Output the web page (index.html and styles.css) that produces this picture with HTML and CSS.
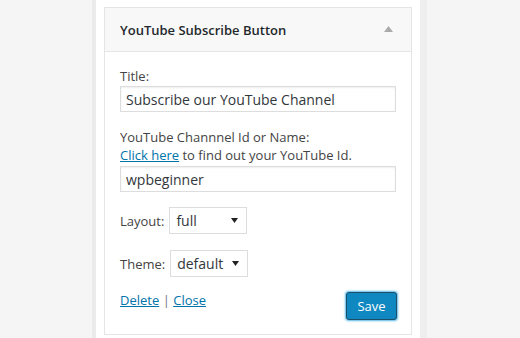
FILE: index.html
```html
<!DOCTYPE html>
<html lang="en">
<head>
  <meta charset="UTF-8" />
  <meta name="viewport" content="width=device-width, initial-scale=1.0" />
  <title>YouTube Subscribe Button - Widget</title>
  <link rel="stylesheet" href="styles.css">
</head>
<body>
  <div class="sidebar-column">
    <div class="widget">
      <div class="widget-top">
        <h3 class="widget-title">YouTube Subscribe Button</h3>
        <svg class="widget-toggle" width="9" height="6" viewBox="0 0 9 6">
          <path d="M4.5 0 L9 6 L0 6 Z" fill="#aaaaaa" />
        </svg>
      </div>
      <div class="widget-inside">
        <div class="field">
          <label class="field-label">Title:</label>
          <input type="text" class="text-input" value="Subscribe our YouTube Channel" />
        </div>

        <div class="field">
          <label class="field-label">YouTube Channnel Id or Name:</label>
          <div class="field-help"><a href="#">Click here</a> to find out your YouTube Id.</div>
          <input type="text" class="text-input" value="wpbeginner" />
        </div>

        <div class="field field-inline">
          <label class="field-label">Layout:</label>
          <div class="select">
            <span>full</span>
            <svg width="7" height="5" viewBox="0 0 7 5"><path d="M0 0 L7 0 L3.5 5 Z" fill="#222" /></svg>
          </div>
        </div>

        <div class="field field-inline">
          <label class="field-label">Theme:</label>
          <div class="select">
            <span>default</span>
            <svg width="7" height="5" viewBox="0 0 7 5"><path d="M0 0 L7 0 L3.5 5 Z" fill="#222" /></svg>
          </div>
        </div>

        <div class="widget-control-actions">
          <div class="action-links">
            <a href="#">Delete</a> <span class="sep">|</span> <a href="#">Close</a>
          </div>
          <button class="button-primary">Save</button>
        </div>
      </div>
    </div>
  </div>
</body>
</html>
```

FILE: styles.css
```css
:root {
  --page-bg: #f5f5f5;
  --column-edge: #ebebeb;
  --border: #e5e5e5;
  --input-border: #dddddd;
  --text: #444444;
  --heading: #23282d;
  --link: #0073aa;
  --primary: #0f87c0;
  --primary-border: #1d4f68;
  font-family: "Open Sans", "Noto Sans", sans-serif;
}

body {
  margin: 0;
  background-color: var(--page-bg);
  font-family: inherit;
  font-size: 13px;
  color: var(--text);
}

.sidebar-column {
  margin-left: 92px;
  width: 307px;
  min-height: 100vh;
  box-sizing: content-box;
  padding: 7px 9px 0 8px;
  background-color: #ffffff;
  border-left: 4px solid var(--column-edge);
  border-right: 7px solid #eeeeee;
}

.widget {
  width: 308px;
  box-sizing: border-box;
  border: 1px solid var(--border);
  background-color: #ffffff;
}

.widget-top {
  display: flex;
  align-items: center;
  justify-content: space-between;
  height: 43px;
  padding: 0 18px 0 15px;
  background-color: #f8f8f8;
  border-bottom: 1px solid var(--border);
}

.widget-title {
  margin: 0;
  font-size: 13px;
  font-weight: 600;
  color: var(--heading);
}

.widget-toggle {
  margin-top: -2px;
}

.widget-inside {
  padding: 15px 14px 14px 15px;
}

.field {
  display: flex;
  flex-direction: column;
  margin-bottom: 16px;
}

.field-label,
.field-help {
  line-height: 18px;
}

.field-label {
  margin-bottom: 1px;
}

.field-help {
  margin-top: -1px;
  margin-bottom: 2px;
}

.field-help a,
.action-links a {
  color: var(--link);
  text-decoration: underline;
}

.text-input {
  box-sizing: border-box;
  width: 276px;
  height: 26px;
  margin: 0;
  padding: 0 5px;
  border: 1px solid var(--input-border);
  box-shadow: inset 0 1px 2px rgba(0, 0, 0, 0.07);
  font-family: inherit;
  font-size: 14px;
  color: #32373c;
  outline: none;
}

.field:nth-child(2) {
  margin-bottom: 15px;
}

.field-inline {
  flex-direction: row;
  align-items: center;
  gap: 5px;
}

.field-inline .field-label {
  margin-bottom: 0;
}

.select {
  box-sizing: border-box;
  width: 78px;
  height: 27px;
  display: flex;
  align-items: center;
  justify-content: space-between;
  padding: 0 8px 0 6px;
  border: 1px solid var(--input-border);
  background-color: #ffffff;
  font-size: 14px;
  color: #32373c;
}

.widget-control-actions {
  display: flex;
  justify-content: space-between;
  align-items: flex-start;
  margin-top: -2px;
}

.action-links {
  line-height: 18px;
}

.sep {
  color: #72777c;
}

.button-primary {
  width: 51px;
  height: 28px;
  margin-top: 1px;
  padding: 0;
  border: 1px solid var(--primary-border);
  border-radius: 3px;
  background-color: var(--primary);
  box-shadow: 0 0 2px 1px #5ab8e6;
  color: #ffffff;
  font-family: inherit;
  font-size: 13px;
  cursor: pointer;
}
```
